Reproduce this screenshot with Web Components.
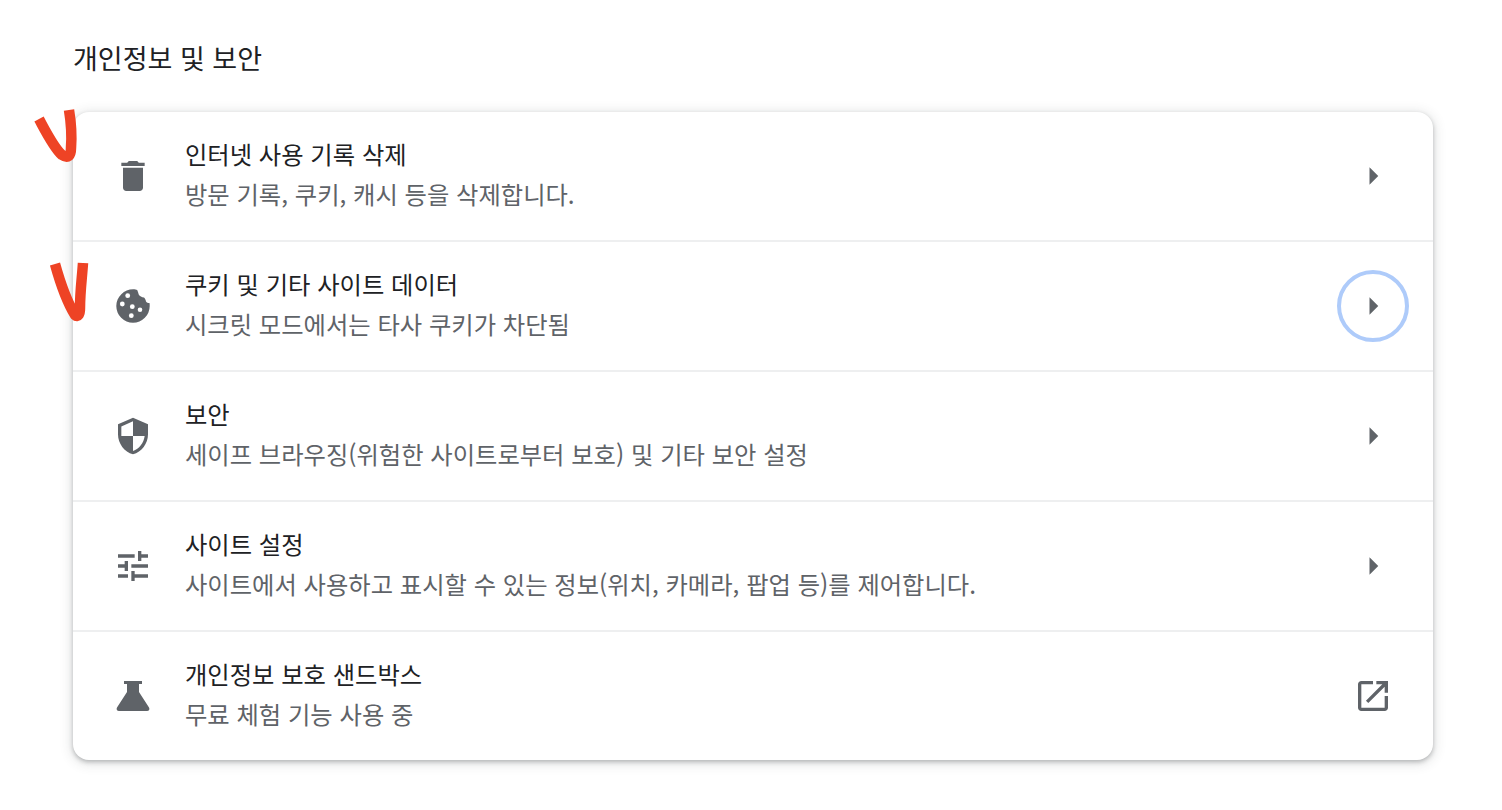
<!DOCTYPE html>
<html lang="ko">
<head>
  <meta charset="UTF-8">
  <title>개인정보 및 보안</title>
  <style>
    html, body { margin: 0; padding: 0; background: #fff; }
    body { font-family: "Noto Sans CJK KR", "Noto Sans", sans-serif; color: #202124; }
  </style>
</head>
<body>
  <privacy-page>
    <settings-row title-text="인터넷 사용 기록 삭제" sub="방문 기록, 쿠키, 캐시 등을 삭제합니다." icon="delete"></settings-row>
    <settings-row title-text="쿠키 및 기타 사이트 데이터" sub="시크릿 모드에서는 타사 쿠키가 차단됨" icon="cookie" focused></settings-row>
    <settings-row title-text="보안" sub="세이프 브라우징(위험한 사이트로부터 보호) 및 기타 보안 설정" icon="shield"></settings-row>
    <settings-row title-text="사이트 설정" sub="사이트에서 사용하고 표시할 수 있는 정보(위치, 카메라, 팝업 등)를 제어합니다." icon="tune"></settings-row>
    <settings-row title-text="개인정보 보호 샌드박스" sub="무료 체험 기능 사용 중" icon="science" external></settings-row>
  </privacy-page>
  <script>
    const ICONS = {
      delete: '<svg viewBox="0 0 24 24"><path d="M6 19c0 1.1.9 2 2 2h8c1.1 0 2-.9 2-2V7H6v12zM19 4h-3.5l-1-1h-5l-1 1H5v2h14V4z"/></svg>',
      cookie: '<svg viewBox="0 0 40 40"><path d="M22.5 3.4C12.5 2 3.3 10 3.3 20a16.7 16.7 0 0 0 33.4 0c0-1 0-2-.2-3-1.5 0-2.8-.5-3.5-1.500-.3-1.700-1-3-2-4-2.200-.2-4.200-1.200-5.300-3-.5-1.500-.7-3-1.500-4.500z"/><g fill="#fff"><circle cx="14.7" cy="9.7" r="2.4"/><circle cx="9.3" cy="18" r="2.4"/><circle cx="19.3" cy="20.7" r="2.4"/><circle cx="27" cy="23.7" r="2.3"/><circle cx="18.3" cy="29.7" r="2.4"/></g></svg>',
      shield: '<svg viewBox="0 0 24 24"><path d="M12 1L3 5v6c0 5.55 3.84 10.74 9 12 5.16-1.26 9-6.45 9-12V5l-9-4zm0 10.99h7c-.53 4.12-3.28 7.79-7 8.94V12H5V6.3l7-3.11v8.8z"/></svg>',
      tune: '<svg viewBox="0 0 24 24"><path d="M3 17v2h6v-2H3zM3 5v2h10V5H3zm10 16v-2h8v-2h-8v-2h-2v6h2zM7 9v2H3v2h4v2h2V9H7zm14 4v-2H11v2h10zm-6-4h2V7h4V5h-4V3h-2v6z"/></svg>',
      science: '<svg viewBox="0 0 40 40"><path d="M11 5h18v3h-3v8l10 15.5c1 1.7 0 3.5-2 3.5H6c-2 0-3-1.800-2-3.500L14 16V8h-3z"/></svg>',
      arrow: '<svg viewBox="0 0 24 24"><path d="M10 17l5-5-5-5v10z"/></svg>',
      open: '<svg viewBox="0 0 24 24"><path d="M19 19H5V5h7V3H5c-1.11 0-2 .9-2 2v14c0 1.1.89 2 2 2h14c1.1 0 2-.9 2-2v-7h-2v7zM14 3v2h3.59l-9.83 9.83 1.41 1.41L19 6.41V10h2V3h-7z"/></svg>'
    };

    class PrivacyPage extends HTMLElement {
      constructor() {
        super();
        this.attachShadow({ mode: 'open' });
        this.shadowRoot.innerHTML = `
          <style>
            :host { display: block; position: relative; width: 1502px; height: 810px; box-sizing: border-box; padding: 39px 69px 0 73px; overflow: hidden; }
            h2 { margin: 0 0 36px; height: 37px; font: 400 27px/37px "Noto Sans CJK KR", "Noto Sans", sans-serif; color: #202124; }
            .card { background: #fff; border-radius: 16px; box-shadow: 0 2px 4px rgba(60,64,67,.3), 0 2px 12px 2px rgba(60,64,67,.15); overflow: hidden; }
            svg.mark { position: absolute; left: 0; top: 0; width: 120px; height: 340px; pointer-events: none; }
            svg.mark path { fill: none; stroke: #ee4325; stroke-width: 10.5; stroke-linecap: butt; stroke-linejoin: round; }
          </style>
          <h2>개인정보 및 보안</h2>
          <div class="card"><slot></slot></div>
          <svg class="mark" viewBox="0 0 120 340">
            <path d="M39 119 C46 132 54 148 62 155 C68 159 71 156 71 148 C72 135 71 122 69 110"/>
            <path d="M55 264 C60 282 67 302 75 315 C78 318 80 314 80 308 C80 292 82 278 83 263"/>
          </svg>`;
      }
    }

    class SettingsRow extends HTMLElement {
      constructor() {
        super();
        this.attachShadow({ mode: 'open' });
      }
      connectedCallback() {
        const icon = this.getAttribute('icon');
        const trailing = this.hasAttribute('external') ? ICONS.open : ICONS.arrow;
        this.shadowRoot.innerHTML = `
          <style>
            :host { display: flex; align-items: center; height: 130px; box-sizing: border-box; border-top: 2px solid #eeeff0; padding: 0 24px 0 32px; }
            :host(:first-child) { border-top: 0; height: 128px; }
            .icon { flex: none; width: 56px; height: 56px; margin-right: 24px; fill: #5f6368; display: flex; align-items: center; justify-content: center; }
            .icon svg { width: 40px; height: 40px; display: block; }
            .text { flex: 1; min-width: 0; padding-bottom: 5px; }
            .title { font-size: 24.3px; line-height: 40px; color: #202124; }
            .sub { font-size: 24.3px; line-height: 40px; color: #5f6368; }
            .btn { flex: none; width: 72px; height: 72px; box-sizing: border-box; border-radius: 50%; fill: #5f6368; display: flex; align-items: center; justify-content: center; }
            .btn svg { width: 42px; height: 42px; display: block; }
            .btn.ext svg { width: 40px; height: 40px; }
            :host([focused]) .btn { border: 4px solid #aecbfa; }
          </style>
          <div class="icon ${icon}">${ICONS[icon]}</div>
          <div class="text">
            <div class="title">${this.getAttribute('title-text')}</div>
            <div class="sub">${this.getAttribute('sub')}</div>
          </div>
          <div class="btn ${this.hasAttribute('external') ? 'ext' : ''}">${trailing}</div>`;
      }
    }

    customElements.define('privacy-page', PrivacyPage);
    customElements.define('settings-row', SettingsRow);
  </script>
</body>
</html>
